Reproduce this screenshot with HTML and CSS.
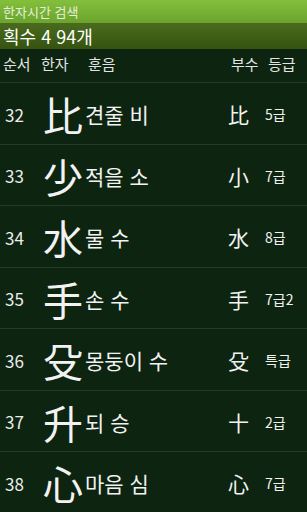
FILE: index.html
```html
<!DOCTYPE html>
<html lang="ko">
<head>
    <meta charset="UTF-8">
    <meta name="viewport" content="width=device-width, initial-scale=1.0">
    <title>한자시간 검색</title>
    <link rel="stylesheet" href="styles.css">
</head>
<body>
    <div class="titlebar">한자시간 검색</div>
    <div class="countbar">획수 4 94개</div>

    <!-- 목록 머리 -->
    <div class="head">
        <span class="h-num">순서</span>
        <span class="h-han">한자</span>
        <span class="h-read">훈음</span>
        <span class="h-rad">부수</span>
        <span class="h-grade">등급</span>
    </div>

    <!-- 목록 -->
    <div class="list">
        <div class="row">
            <span class="num">32</span>
            <span class="han">比</span>
            <span class="read">견줄 비</span>
            <span class="rad">比</span>
            <span class="grade">5급</span>
        </div>
        <div class="row">
            <span class="num">33</span>
            <span class="han">少</span>
            <span class="read">적을 소</span>
            <span class="rad">小</span>
            <span class="grade">7급</span>
        </div>
        <div class="row">
            <span class="num">34</span>
            <span class="han">水</span>
            <span class="read">물 수</span>
            <span class="rad">水</span>
            <span class="grade">8급</span>
        </div>
        <div class="row">
            <span class="num">35</span>
            <span class="han">手</span>
            <span class="read">손 수</span>
            <span class="rad">手</span>
            <span class="grade">7급2</span>
        </div>
        <div class="row">
            <span class="num">36</span>
            <span class="han">殳</span>
            <span class="read">몽둥이 수</span>
            <span class="rad">殳</span>
            <span class="grade">특급</span>
        </div>
        <div class="row">
            <span class="num">37</span>
            <span class="han">升</span>
            <span class="read">되 승</span>
            <span class="rad">十</span>
            <span class="grade">2급</span>
        </div>
        <div class="row">
            <span class="num">38</span>
            <span class="han">心</span>
            <span class="read">마음 심</span>
            <span class="rad">心</span>
            <span class="grade">7급</span>
        </div>
    </div>
</body>
</html>
```

FILE: styles.css
```css
body {
    margin: 0;
    width: 307px;
    height: 512px;
    overflow: hidden;
    background-color: #0d2410;
    color: #f2f2f2;
    font-family: "Noto Sans CJK KR", "Noto Sans", sans-serif;
}
.titlebar {
    height: 23px;
    line-height: 23px;
    padding-left: 3px;
    font-size: 13px;
    color: #e6efd8;
    background: linear-gradient(#84bf3c, #6aa42e);
}
.countbar {
    height: 26px;
    line-height: 26px;
    padding-left: 3px;
    font-size: 18px;
    color: #fff;
    background: linear-gradient(#4a6b1e, #35530f);
}
.head, .row {
    display: grid;
    grid-template-columns: 41px 44px 1fr 37px 42px;
    align-items: center;
}
.head {
    height: 33px;
    padding-bottom: 4px;
    box-sizing: border-box;
    font-size: 15px;
    color: #e4e4e4;
}
.h-num { padding-left: 3px; }
.h-read { padding-left: 3px; }
.h-rad { padding-left: 3px; }
.h-grade { padding-left: 3px; }
.row {
    height: 61.5px;
    box-sizing: border-box;
    border-top: 1px solid #213d24;
    padding-top: 2px;
}
.num {
    padding-left: 5px;
    font-size: 17px;
    color: #ececec;
}
.han {
    font-size: 40px;
    line-height: 1;
    margin-left: 2px;
}
.read {
    font-size: 21px;
    white-space: nowrap;
}
.rad {
    font-size: 21px;
}
.grade {
    font-size: 14px;
    white-space: nowrap;
}
```
